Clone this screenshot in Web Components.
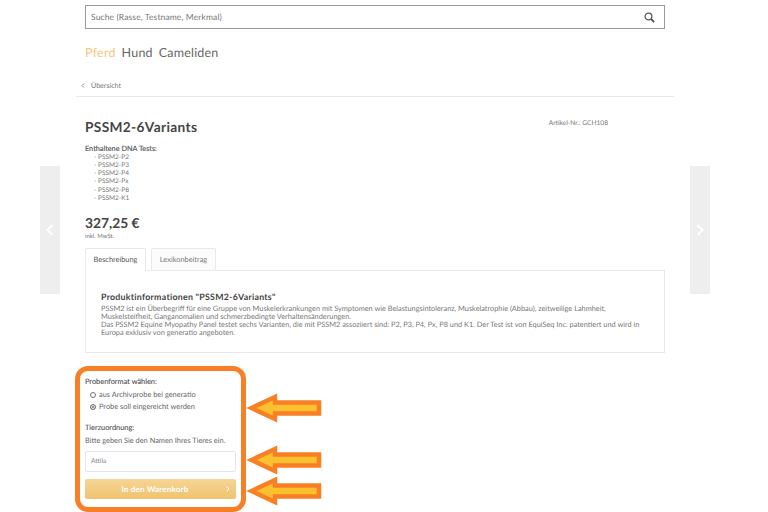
<!DOCTYPE html>
<html lang="de">
<head>
<meta charset="utf-8">
<title>PSSM2-6Variants</title>
<style>
  html, body { margin: 0; background: #fff; }
  body { font-family: Lato, "Open Sans", sans-serif; color: #555; width: 768px; height: 512px; overflow: hidden; position: relative; text-rendering: geometricPrecision; }
</style>
</head>
<body>
<side-arrow dir="left"></side-arrow>
<side-arrow dir="right"></side-arrow>
<search-bar></search-bar>
<species-nav></species-nav>
<back-link></back-link>
<product-head></product-head>
<product-tabs></product-tabs>
<order-form></order-form>

<script>
class SideArrow extends HTMLElement {
    constructor() {
        super();
        this.attachShadow({ mode: 'open' });
    }
    connectedCallback() {
        const left = this.getAttribute('dir') === 'left';
        this.shadowRoot.innerHTML = `
            <style>
                :host { position: absolute; top: 166px; ${left ? 'left: 40px' : 'left: 690px'}; width: 20px; height: 128px;
                    background: #eee; display: flex; align-items: center; justify-content: center; }
                svg { display: block; }
            </style>
            <svg width="8" height="12" viewBox="0 0 8 12" fill="none" stroke="#fff" stroke-width="2">
                <path d="${left ? 'M6.5 1 L1.5 6 L6.5 11' : 'M1.5 1 L6.5 6 L1.5 11'}"/>
            </svg>`;
    }
}

class SearchBar extends HTMLElement {
    constructor() {
        super();
        this.attachShadow({ mode: 'open' });
        this.shadowRoot.innerHTML = `
            <style>
                :host { display: flex; align-items: center; justify-content: space-between; box-sizing: border-box;
                    margin: 5px 0 0 85px; width: 580px; height: 24px; border: 1px solid #9a9a9a; padding: 0 9px 0 5px;
                    font-size: 8.5px; letter-spacing: .12px; color: #777; }
                svg { display: block; }
            </style>
            <span>Suche (Rasse, Testname, Merkmal)</span>
            <svg width="11" height="11" viewBox="0 0 11 11" fill="none" stroke="#555">
                <circle cx="4.5" cy="4.5" r="3.4" stroke-width="1.3"/>
                <path d="M7 7 L10.2 10.2" stroke-width="1.8"/>
            </svg>`;
    }
}

class SpeciesNav extends HTMLElement {
    constructor() {
        super();
        this.attachShadow({ mode: 'open' });
        this.shadowRoot.innerHTML = `
            <style>
                :host { display: flex; gap: 6px; margin: 16px 0 0 85px; height: 16px; line-height: 16px;
                    font-size: 12.5px; letter-spacing: .2px; color: #666; }
                .on { color: #f3c77e; }
            </style>
            <span class="on">Pferd</span><span>Hund</span><span>Cameliden</span>`;
    }
}

class BackLink extends HTMLElement {
    constructor() {
        super();
        this.attachShadow({ mode: 'open' });
        this.shadowRoot.innerHTML = `
            <style>
                :host { display: flex; align-items: center; box-sizing: border-box; gap: 6px; margin: 16px 0 0 76px; width: 598px;
                    height: 20px; padding: 0 0 3px 5px; border-bottom: 1px solid #e8e8ee; font-size: 7.1px; color: #777; }
            </style>
            <svg width="4" height="5" viewBox="0 0 4 5" fill="none" stroke="#666" stroke-width=".8"><path d="M3 .5 L1 2.5 L3 4.5"/></svg>
            <span>Übersicht</span>`;
    }
}

class ProductHead extends HTMLElement {
    constructor() {
        super();
        this.attachShadow({ mode: 'open' });
        const tests = ['P2', 'P3', 'P4', 'Px', 'P8', 'K1'];
        this.shadowRoot.innerHTML = `
            <style>
                :host { display: block; margin: 20px 0 0 85px; width: 580px; position: relative; }
                .top { display: flex; justify-content: space-between; align-items: flex-start; }
                h1 { margin: 0; font-size: 13.7px; line-height: 20px; font-weight: 700; color: #444; letter-spacing: .35px; }
                .nr { font-size: 6.6px; line-height: 10px; margin: 1px 57px 0 0; color: #777; }
                h2 { margin: 8px 0 0; font-size: 7.3px; line-height: 8px; font-weight: 400; color: #555; -webkit-text-stroke: .15px #555; }
                ul { list-style: none; margin: 1px 0 0 9px; padding: 0; font-size: 6.5px; line-height: 8.15px; color: #777; }
                .price { margin-top: 11px; font-size: 13.8px; line-height: 18px; font-weight: 700; color: #444; }
                .tax { font-size: 6px; line-height: 7px; margin-top: 1px; color: #777; }
            </style>
            <div class="top"><h1>PSSM2-6Variants</h1><span class="nr">Artikel-Nr.: GCH108</span></div>
            <h2>Enthaltene DNA Tests:</h2>
            <ul>${tests.map(t => `<li>- PSSM2-${t}</li>`).join('')}</ul>
            <div class="price">327,25 €</div>
            <div class="tax">inkl. MwSt.</div>`;
    }
}

class ProductTabs extends HTMLElement {
    constructor() {
        super();
        this.attachShadow({ mode: 'open' });
        this.shadowRoot.innerHTML = `
            <style>
                :host { display: block; margin: 8px 0 0 85px; width: 580px; }
                .tabs { display: flex; gap: 5px; height: 22px; position: relative; z-index: 1; }
                .tab { box-sizing: border-box; height: 22px; border: 1px solid #e8e8ee; border-bottom: none; border-radius: 2px 2px 0 0;
                    display: flex; align-items: center; justify-content: center; font-size: 7.4px; color: #777; }
                .tab.on { width: 61px; height: 23px; background: #fff; color: #555; }
                .tab.off { width: 65px; background: #fcfcfc; }
                .panel { box-sizing: border-box; height: 83px; border: 1px solid #e8e8ee; padding: 20px 15px 0; }
                h3 { margin: 0; font-size: 8.8px; line-height: 11px; font-weight: 700; color: #444; letter-spacing: .26px; }
                p { margin: 3px 0 0; font-size: 7.35px; line-height: 8.1px; color: #777; }
            </style>
            <div class="tabs">
                <div class="tab on">Beschreibung</div>
                <div class="tab off">Lexikonbeitrag</div>
            </div>
            <div class="panel">
                <h3>Produktinformationen "PSSM2-6Variants"</h3>
                <p>PSSM2 ist ein Überbegriff für eine Gruppe von Muskelerkrankungen mit Symptomen wie Belastungsintoleranz, Muskelatrophie (Abbau), zeitweilige Lahmheit,<br>
                Muskelsteifheit, Ganganomalien und schmerzbedingte Verhaltensänderungen.<br>
                Das PSSM2 Equine Myopathy Panel testet sechs Varianten, die mit PSSM2 assoziiert sind: P2, P3, P4, Px, P8 und K1. Der Test ist von EquiSeq Inc. patentiert und wird in<br>
                Europa exklusiv von generatio angeboten.</p>
            </div>`;
    }
}

class OrderForm extends HTMLElement {
    constructor() {
        super();
        this.attachShadow({ mode: 'open' });
        const arrow = top => `
            <svg class="arrow" style="top:${top}px" width="76" height="30" viewBox="0 0 76 30">
                <path d="M5.5 15 L29 4 L29 9.5 L73 9.5 L73 20.5 L29 20.5 L29 26 Z" fill="#fbc02d" stroke="#f97f26" stroke-width="4.5"/>
            </svg>`;
        this.shadowRoot.innerHTML = `
            <style>
                :host { display: block; position: relative; box-sizing: border-box; margin: 13px 0 0 75px; width: 171px; height: 146px;
                    border: 5px solid #f97f26; border-radius: 13px; padding: 6px 5px 0; color: #555; }
                .label { font-size: 7.4px; line-height: 10px; color: #555; -webkit-text-stroke: .12px #555; }
                .radios { margin: 2px 0 0 5px; }
                .radio { display: flex; align-items: center; gap: 3px; height: 12px; font-size: 7.4px; color: #666; }
                .dot { box-sizing: border-box; width: 6px; height: 6px; border: 1px solid #777; border-radius: 50%; background: #fff; }
                .dot.on { background: #777; box-shadow: inset 0 0 0 1px #fff; }
                .tier { margin-top: 10px; }
                .hint { margin-top: 3px; font-size: 7.4px; line-height: 10px; color: #666; }
                .input { box-sizing: border-box; height: 21px; width: 151px; margin-top: 5px; border: 1px solid #e4e4ec; border-radius: 2px;
                    display: flex; align-items: center; padding-left: 5px; font-size: 6.6px; color: #888; }
                .btn { box-sizing: border-box; height: 20px; width: 151px; margin-top: 7px; border-radius: 2px; padding-right: 11px;
                    background: linear-gradient(#f6d595, #efc36f); color: #fff; font-size: 8px; font-weight: 700; letter-spacing: .2px;
                    display: flex; align-items: center; justify-content: center; position: relative; }
                .btn svg { position: absolute; right: 6px; top: 7px; }
                .arrow { position: absolute; left: 166px; }
            </style>
            <div class="label">Probenformat wählen:</div>
            <div class="radios">
                <div class="radio"><span class="dot"></span>aus Archivprobe bei generatio</div>
                <div class="radio"><span class="dot on"></span>Probe soll eingereicht werden</div>
            </div>
            <div class="label tier">Tierzuordnung:</div>
            <div class="hint">Bitte geben Sie den Namen Ihres Tieres ein.</div>
            <div class="input">Attila</div>
            <div class="btn">In den Warenkorb
                <svg width="4" height="6" viewBox="0 0 4 6" fill="none" stroke="#fff" stroke-width="1"><path d="M.7 .7 L3 3 L.7 5.3"/></svg>
            </div>
            ${arrow(22.5)}${arrow(74.5)}${arrow(105.5)}`;
    }
}

customElements.define('side-arrow', SideArrow);
customElements.define('search-bar', SearchBar);
customElements.define('species-nav', SpeciesNav);
customElements.define('back-link', BackLink);
customElements.define('product-head', ProductHead);
customElements.define('product-tabs', ProductTabs);
customElements.define('order-form', OrderForm);
</script>
</body>
</html>
